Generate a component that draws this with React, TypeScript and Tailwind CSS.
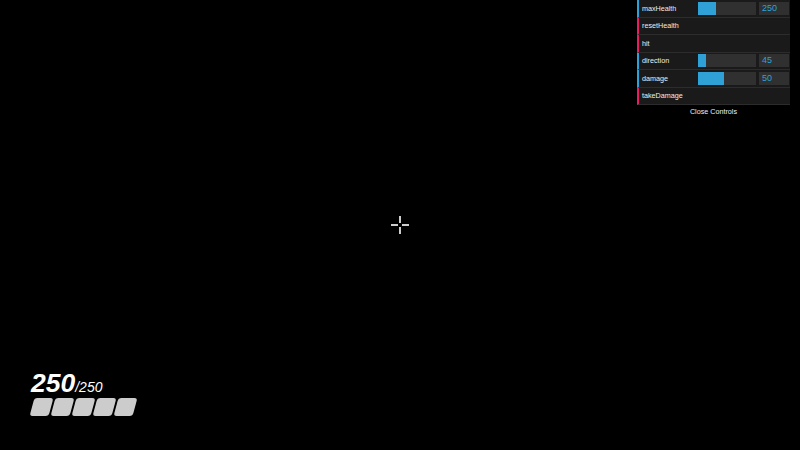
import React from "react";

type Row =
  | { kind: "num"; label: string; value: string; pct: number }
  | { kind: "fn"; label: string };

const rows: Row[] = [
  { kind: "num", label: "maxHealth", value: "250", pct: 31 },
  { kind: "fn", label: "resetHealth" },
  { kind: "fn", label: "hit" },
  { kind: "num", label: "direction", value: "45", pct: 13 },
  { kind: "num", label: "damage", value: "50", pct: 45 },
  { kind: "fn", label: "takeDamage" },
];

function GuiRow({ row }: { row: Row }) {
  const border = row.kind === "num" ? "border-l-[#2fa1d6]" : "border-l-[#e61d5f]";
  return (
    <div
      className={`flex h-[17.5px] items-center border-b border-b-[#2c2c2c] border-l-2 ${border} bg-[#1a1a1a] pl-[3px] pr-[2px]`}
    >
      <div className="w-[56px] shrink-0 text-[7.2px] leading-none text-[#eee]">{row.label}</div>
      {row.kind === "num" && (
        <div className="flex flex-1 items-center gap-[3px]">
          <div className="h-[13px] w-[58px] bg-[#303030]">
            <div className="h-full bg-[#2fa1d6]" style={{ width: `${row.pct}%` }} />
          </div>
          <div className="flex h-[13px] w-[30px] items-center bg-[#303030] pl-[3px] text-[9px] leading-none text-[#2fa1d6]">
            {row.value}
          </div>
        </div>
      )}
    </div>
  );
}

export default function App() {
  return (
    <div
      className="relative h-[450px] w-[800px] overflow-hidden bg-black"
      style={{ fontFamily: '"Liberation Sans", Arial, sans-serif' }}
    >
      {/* dat.gui panel */}
      <div className="absolute right-[10px] top-0 w-[153px]">
        {rows.map((r) => (
          <GuiRow key={r.label} row={r} />
        ))}
        <div className="flex h-[13px] items-center justify-center bg-black text-[7.2px] leading-none text-[#eee]">
          Close Controls
        </div>
      </div>

      {/* crosshair */}
      <svg
        className="absolute left-[389px] top-[214px]"
        width="22"
        height="22"
        viewBox="0 0 22 22"
      >
        <g stroke="#fff" strokeWidth="1.6">
          <line x1="11" y1="2" x2="11" y2="9" />
          <line x1="11" y1="13" x2="11" y2="20" />
          <line x1="2" y1="11" x2="9" y2="11" />
          <line x1="13" y1="11" x2="20" y2="11" />
        </g>
      </svg>

      {/* health HUD */}
      <div className="absolute left-[31px] top-[370px] flex flex-col gap-[2px]">
        <div className="flex items-baseline text-white italic">
          <span className="text-[26.5px] font-bold leading-[26px]">250</span>
          <span className="text-[14px] leading-none">/250</span>
        </div>
        <div className="flex gap-[2.5px] pl-[0.5px]">
          {[0, 1, 2, 3, 4].map((i) => (
            <div key={i} className="h-[18px] w-[18.5px] skew-x-[-15deg] rounded-[3px] bg-[#cccccc]" />
          ))}
        </div>
      </div>
    </div>
  );
}
